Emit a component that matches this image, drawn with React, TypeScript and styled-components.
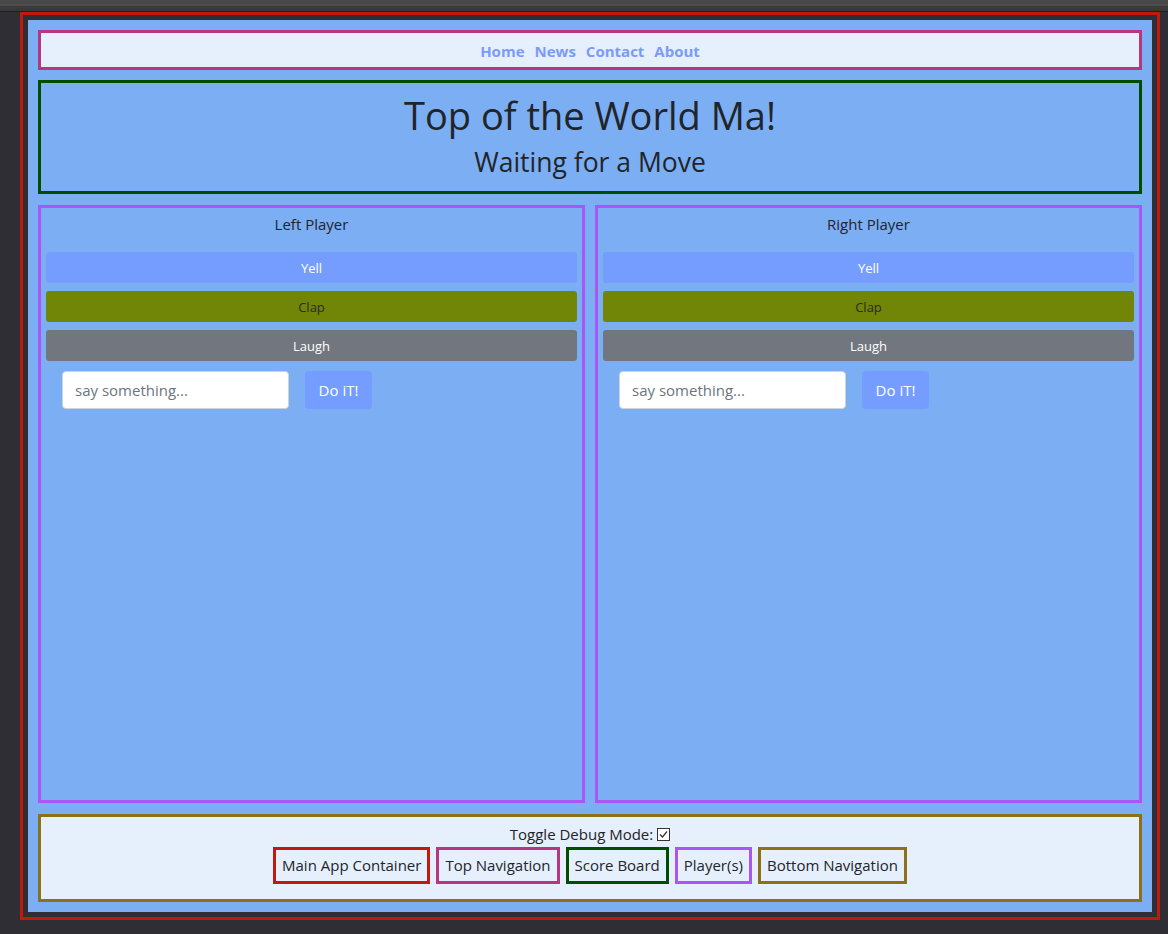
import React from "react";
import styled, { createGlobalStyle } from "styled-components";

const Global = createGlobalStyle`
  html, body { margin: 0; padding: 0; }
  body {
    background: #2f2e34;
    font-family: "Open Sans", "Noto Sans", sans-serif;
    color: #212529;
    font-size: 16px;
    line-height: 1.5;
  }
  * { box-sizing: border-box; }
`;

const TopStrip = styled.div`
  height: 12px;
  background: linear-gradient(#4a4a4a 0, #474747 4px, #5a5a5a 5px, #3c3c3c 6px, #38383a 10px);
  border-bottom: 1px solid #1e1e20;
`;

const AppContainer = styled.div`
  margin: 0 8px 0 20px;
  height: 908px;
  border: 3px solid #bf1a0e;
  padding: 5px;
`;

const Surface = styled.div`
  height: 100%;
  background: #7caef3;
  padding: 10px;
  display: flex;
  flex-direction: column;
`;

const TopNav = styled.nav`
  height: 40px;
  flex: none;
  border: 3px solid #b6377f;
  background: #e6effc;
  display: flex;
  justify-content: center;
  align-items: center;
  gap: 10px;
  padding-top: 2px;
`;

const NavLink = styled.a`
  color: #7b9bfc;
  font-weight: 700;
  font-size: 15px;
  text-decoration: none;
  cursor: pointer;
`;

const ScoreBoard = styled.section`
  margin-top: 10px;
  height: 114px;
  flex: none;
  border: 3px solid #004d00;
  text-align: center;
  padding-top: 8px;
`;

const Title = styled.h1`
  margin: 0 0 6px;
  font-size: 38px;
  font-weight: 400;
  line-height: 48px;
`;

const Status = styled.h3`
  margin: 0;
  font-size: 26.5px;
  font-weight: 400;
  line-height: 34px;
`;

const Players = styled.div`
  margin-top: 11px;
  flex: 1;
  display: grid;
  grid-template-columns: 1fr 1fr;
  gap: 10px;
  min-height: 0;
`;

const PlayerCard = styled.div`
  border: 3px solid #aa55f5;
  padding: 4px 5px;
  display: flex;
  flex-direction: column;
`;

const PlayerName = styled.div`
  text-align: center;
  font-size: 15px;
  line-height: 24px;
  margin-bottom: 16px;
`;

const ActionStack = styled.div`
  display: flex;
  flex-direction: column;
  gap: 8px;
`;

const ActionButton = styled.button<{ $bg: string; $fg: string }>`
  height: 31px;
  border: 0;
  border-radius: 3px;
  background: ${(p) => p.$bg};
  color: ${(p) => p.$fg};
  font-family: inherit;
  font-size: 13px;
  cursor: pointer;
`;

const SayRow = styled.div`
  display: flex;
  gap: 16px;
  margin-top: 10px;
  padding: 0 16px;
`;

const SayInput = styled.input`
  width: 227px;
  height: 38px;
  border: 1px solid #ced4da;
  border-radius: 4px;
  padding: 6px 12px;
  font-family: inherit;
  font-size: 15px;
  color: #212529;
  background: #fff;
  &::placeholder { color: #6c757d; }
`;

const DoButton = styled.button`
  width: 67px;
  height: 38px;
  border: 0;
  border-radius: 4px;
  background: #759dff;
  color: #fff;
  font-family: inherit;
  font-size: 15px;
  cursor: pointer;
`;

const BottomNav = styled.footer`
  margin-top: 11px;
  height: 88px;
  flex: none;
  border: 3px solid #8c7119;
  background: #e6effc;
  padding-top: 5px;
  display: flex;
  flex-direction: column;
  align-items: center;
`;

const ToggleLine = styled.label`
  display: flex;
  align-items: center;
  gap: 4px;
  height: 25px;
  font-size: 15px;
`;

const CheckBox = styled.span`
  width: 13px;
  height: 13px;
  border: 1px solid #333;
  background: #fff;
  display: inline-flex;
  align-items: center;
  justify-content: center;
`;

const LegendRow = styled.div`
  display: flex;
  gap: 6px;
`;

const Legend = styled.span<{ $color: string }>`
  height: 37px;
  border: 3px solid ${(p) => p.$color};
  padding: 0 6px;
  display: flex;
  align-items: center;
  font-size: 15px;
`;

const actions = [
  { label: "Yell", bg: "#759dff", fg: "#ffffff" },
  { label: "Clap", bg: "#718506", fg: "#2b2b2b" },
  { label: "Laugh", bg: "#72767f", fg: "#ffffff" },
];

const legends = [
  { label: "Main App Container", color: "#bf1a0e" },
  { label: "Top Navigation", color: "#b6377f" },
  { label: "Score Board", color: "#004d00" },
  { label: "Player(s)", color: "#aa55f5" },
  { label: "Bottom Navigation", color: "#8c7119" },
];

function Player({ name }: { name: string }) {
  return (
    <PlayerCard>
      <PlayerName>{name}</PlayerName>
      <ActionStack>
        {actions.map((a) => (
          <ActionButton key={a.label} $bg={a.bg} $fg={a.fg}>
            {a.label}
          </ActionButton>
        ))}
      </ActionStack>
      <SayRow>
        <SayInput placeholder="say something..." />
        <DoButton>Do iT!</DoButton>
      </SayRow>
    </PlayerCard>
  );
}

export default function App() {
  return (
    <>
      <Global />
      <TopStrip />
      <AppContainer>
        <Surface>
          <TopNav>
            <NavLink>Home</NavLink>
            <NavLink>News</NavLink>
            <NavLink>Contact</NavLink>
            <NavLink>About</NavLink>
          </TopNav>
          <ScoreBoard>
            <Title>Top of the World Ma!</Title>
            <Status>Waiting for a Move</Status>
          </ScoreBoard>
          <Players>
            <Player name="Left Player" />
            <Player name="Right Player" />
          </Players>
          <BottomNav>
            <ToggleLine>
              Toggle Debug Mode:
              <CheckBox>
                <svg width="11" height="11" viewBox="0 0 11 11">
                  <path d="M2 5.5 L4.5 8 L9 2.5" fill="none" stroke="#333" strokeWidth="1.2" />
                </svg>
              </CheckBox>
            </ToggleLine>
            <LegendRow>
              {legends.map((l) => (
                <Legend key={l.label} $color={l.color}>
                  {l.label}
                </Legend>
              ))}
            </LegendRow>
          </BottomNav>
        </Surface>
      </AppContainer>
    </>
  );
}
